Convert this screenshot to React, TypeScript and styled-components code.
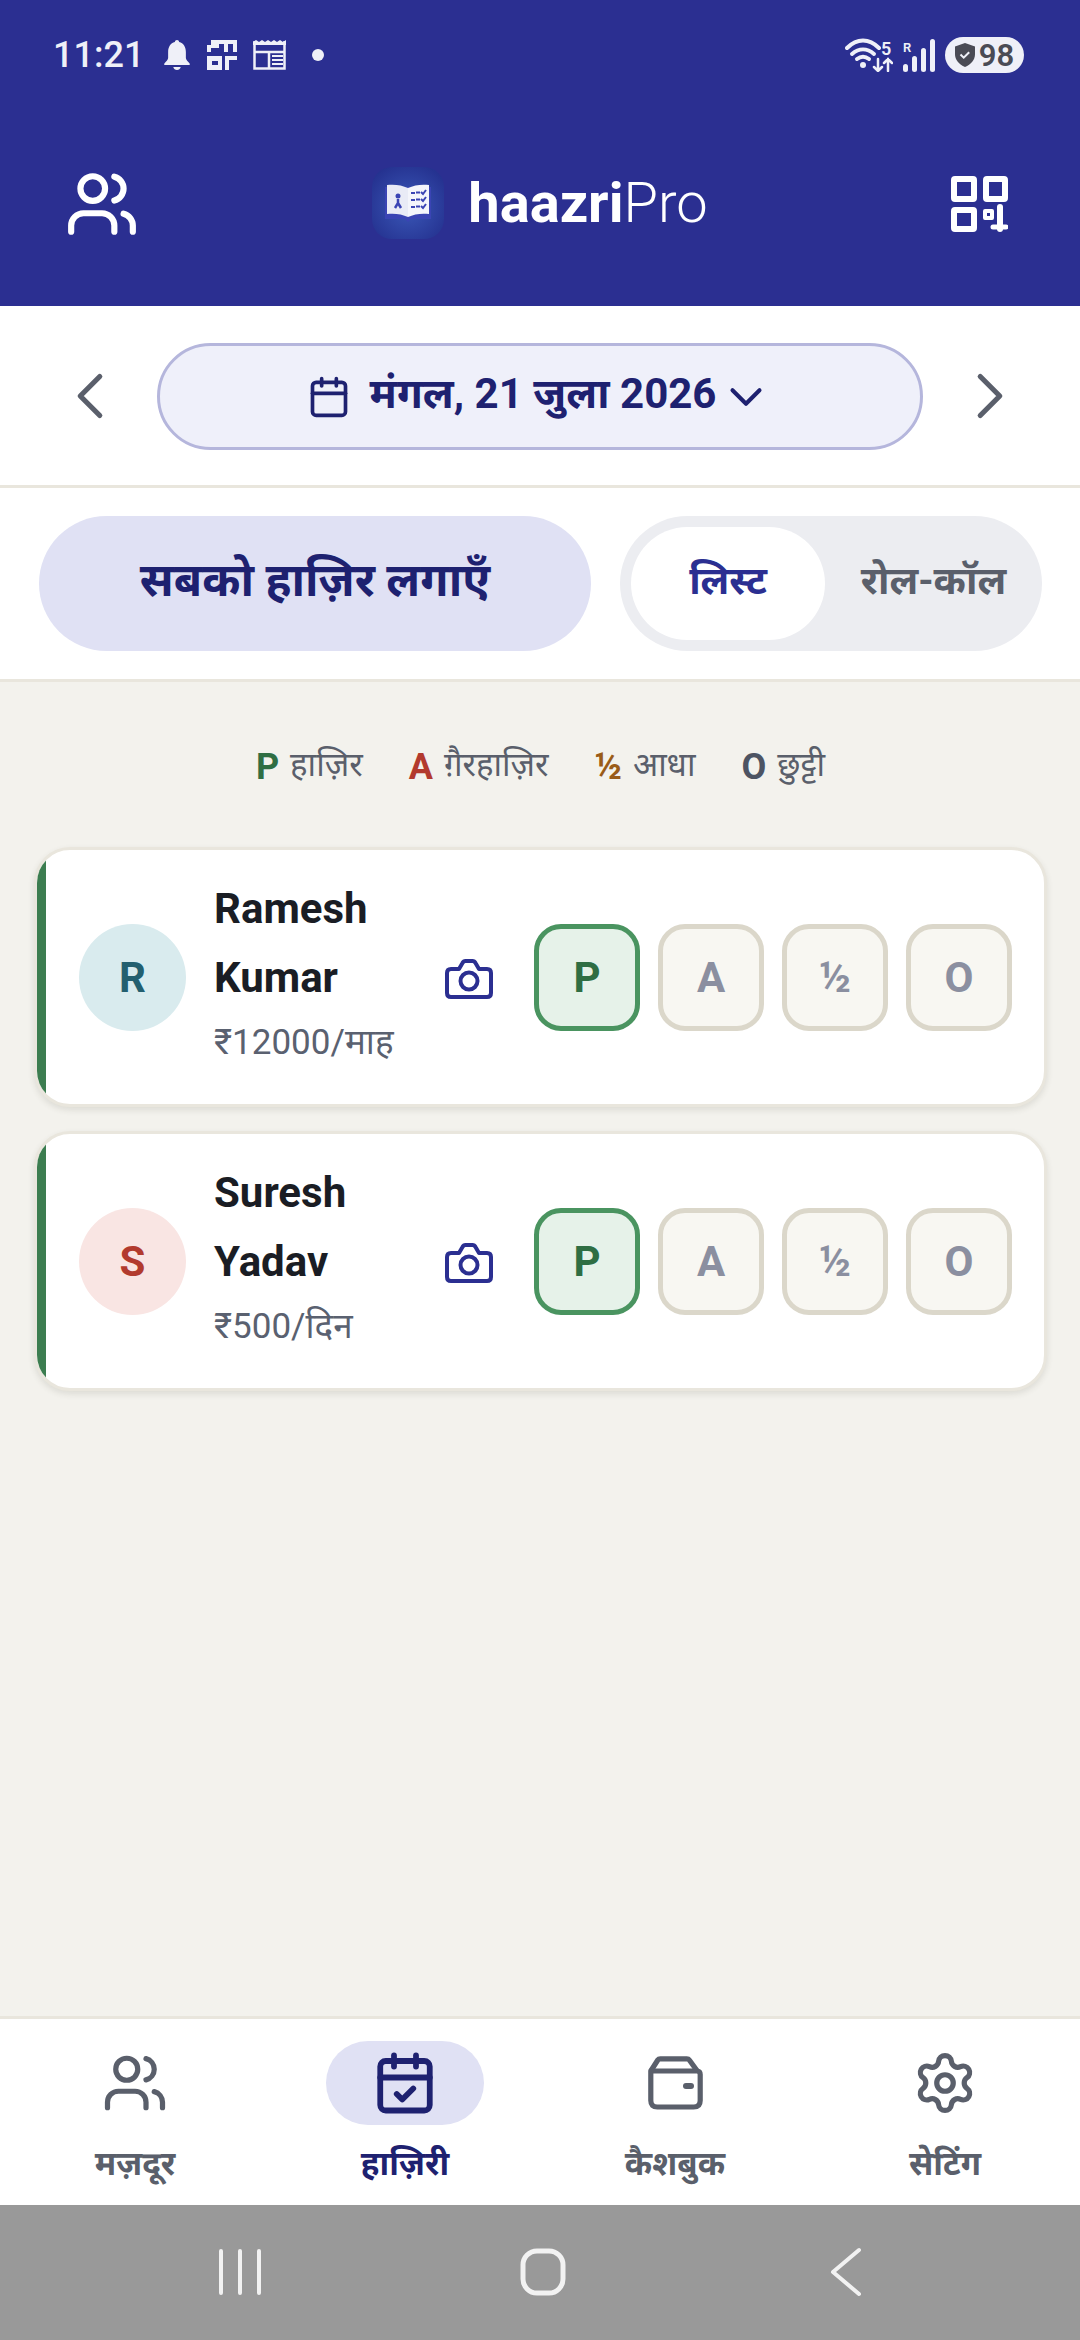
import React from "react";
import styled, { createGlobalStyle } from "styled-components";
import { Users, ChevronLeft, ChevronRight, ChevronDown, Calendar, CalendarCheck, Settings } from "lucide-react";

const Global = createGlobalStyle`
  html, body { margin: 0; padding: 0; background: #f3f2ed; }
  body { font-family: Roboto, "Noto Sans Devanagari", "Noto Sans", sans-serif; }
  * { box-sizing: border-box; }
`;

const Page = styled.div`
  width: 1080px;
  height: 2340px;
  display: flex;
  flex-direction: column;
  overflow: hidden;
  background: #f3f2ed;
`;
const Header = styled.header`
  height: 306px;
  background: #2b2f91;
  color: #fff;
  display: flex;
  flex-direction: column;
`;
const StatusBar = styled.div`
  height: 110px;
  padding: 0 56px 0 53px;
  display: flex;
  align-items: center;
  justify-content: space-between;
  color: #eff0f8;
`;
const StatusGroup = styled.div<{ $gap: number }>`
  display: flex;
  align-items: center;
  gap: ${(p) => p.$gap}px;
`;
const Time = styled.span`
  font: 500 36px Roboto, sans-serif;
  margin-right: 3px;
`;
const Dot = styled.span`
  width: 12px;
  height: 12px;
  margin-left: 10px;
  border-radius: 50%;
  background: currentColor;
`;
const Battery = styled.div`
  width: 79px;
  height: 36px;
  border-radius: 18px;
  background: #eff0f8;
  color: #4a4b55;
  display: flex;
  align-items: center;
  justify-content: center;
  gap: 4px;
  font: 600 31px Roboto, sans-serif;
`;
const TopBar = styled.div`
  flex: 1;
  padding: 0 72px 8px 65px;
  display: flex;
  align-items: center;
  justify-content: space-between;
`;
const Brand = styled.div`
  display: flex;
  align-items: center;
  gap: 24px;
  margin: 0 10px 2px 0;
`;
const BrandText = styled.div`
  font: 300 56px Roboto, sans-serif;
  b { font-weight: 700; }
`;
const DateRow = styled.div`
  height: 182px;
  background: #fff;
  border-bottom: 3px solid #e9e6dd;
  display: flex;
  align-items: center;
  justify-content: space-between;
  padding: 0 51px;
  color: #5a5f6b;
`;
const DatePill = styled.div`
  width: 766px;
  height: 107px;
  margin-top: 2px;
  border: 3px solid #b5b6dc;
  border-radius: 54px;
  background: #eff0fa;
  color: #1e2170;
  display: flex;
  align-items: center;
  justify-content: center;
  font-weight: 700;
  font-size: 42px;
`;
const DateLabel = styled.span`
  margin: 0 3px 0 19px;
`;
const ActionRow = styled.div`
  height: 194px;
  background: #fff;
  border-bottom: 3px solid #e9e6dd;
  display: flex;
  align-items: center;
  padding: 0 38px 0 39px;
  gap: 29px;
`;
const MarkAll = styled.div`
  width: 552px;
  height: 135px;
  border-radius: 68px;
  background: #e0e1f4;
  color: #1e2170;
  display: flex;
  align-items: center;
  justify-content: center;
  font-weight: 700;
  font-size: 46px;
`;
const Toggle = styled.div`
  width: 422px;
  height: 135px;
  border-radius: 68px;
  background: #ecedf1;
  padding: 11px 0 11px 11px;
  display: flex;
  align-items: center;
`;
const ToggleItem = styled.div<{ $on?: boolean }>`
  flex: ${(p) => (p.$on ? "0 0 194px" : "1")};
  height: 113px;
  border-radius: 57px;
  background: ${(p) => (p.$on ? "#fff" : "transparent")};
  color: ${(p) => (p.$on ? "#2b2f91" : "#5a5f6b")};
  display: flex;
  align-items: center;
  justify-content: center;
  font-weight: 700;
  font-size: 39px;
`;
const Main = styled.main`
  flex: 1;
  padding: 0 33px 0 34px;
  display: flex;
  flex-direction: column;
`;
const Legend = styled.div`
  height: 165px;
  padding-top: 5px;
  display: flex;
  align-items: center;
  justify-content: center;
  gap: 46px;
  font-size: 33px;
  color: #5a5f6b;
`;
const LegendItem = styled.span`
  display: flex;
  align-items: center;
  gap: 11px;
`;
const LegendKey = styled.b<{ $c: string }>`
  color: ${(p) => p.$c};
  font-size: 36px;
  font-weight: 700;
`;
const Cards = styled.div`
  display: flex;
  flex-direction: column;
  gap: 24px;
`;
const Card = styled.div`
  position: relative;
  overflow: hidden;
  height: 260px;
  background: #fff;
  border: 3px solid #e9e6dd;
  border-radius: 36px;
  box-shadow: 0 3px 6px rgba(60, 55, 40, 0.12);
  display: flex;
  align-items: center;
  padding: 0 32px 0 42px;
  &::before {
    content: "";
    position: absolute;
    left: 0;
    top: 0;
    bottom: 0;
    width: 9px;
    background: #3c7d50;
  }
`;
const Avatar = styled.div<{ $bg: string; $c: string }>`
  flex: none;
  width: 107px;
  height: 107px;
  border-radius: 50%;
  background: ${(p) => p.$bg};
  color: ${(p) => p.$c};
  display: flex;
  align-items: center;
  justify-content: center;
  font: 700 42px Roboto, sans-serif;
`;
const Info = styled.div`
  width: 231px;
  margin-left: 28px;
  padding-bottom: 6px;
  flex: none;
`;
const Name = styled.div`
  font: 700 42px/69px Roboto, sans-serif;
  color: #1a1d24;
`;
const Sub = styled.div`
  font-size: 35px;
  line-height: 62px;
  color: #5a6170;
`;
const CamWrap = styled.div`
  color: #2b2f91;
  display: flex;
  margin-top: 4px;
`;
const Marks = styled.div`
  margin-left: auto;
  display: flex;
  gap: 18px;
`;
const Mark = styled.div<{ $on?: boolean }>`
  width: 106px;
  height: 107px;
  border-radius: 27px;
  border: 5px solid ${(p) => (p.$on ? "#4a9460" : "#dbd7ca")};
  background: ${(p) => (p.$on ? "#e6f2e9" : "#f8f7f2")};
  color: ${(p) => (p.$on ? "#2f6e43" : "#8b8fa0")};
  display: flex;
  align-items: center;
  justify-content: center;
  font: 700 42px Roboto, sans-serif;
`;
const BottomNav = styled.nav`
  height: 189px;
  background: #fff;
  border-top: 3px solid #e9e6dd;
  display: grid;
  grid-template-columns: repeat(4, 1fr);
`;
const NavItem = styled.div<{ $on?: boolean }>`
  display: flex;
  flex-direction: column;
  align-items: center;
  padding-top: 22px;
  color: ${(p) => (p.$on ? "#1e2170" : "#5a5f6b")};
  font-weight: 700;
  font-size: 33px;
`;
const NavIcon = styled.div<{ $on?: boolean }>`
  width: 158px;
  height: 84px;
  border-radius: 42px;
  background: ${(p) => (p.$on ? "#e0e1f4" : "transparent")};
  display: flex;
  align-items: center;
  justify-content: center;
  margin-bottom: 19px;
`;
const SystemBar = styled.div`
  height: 135px;
  background: #999999;
  display: flex;
  align-items: center;
  justify-content: center;
  padding: 0 0 1px 5px;
`;
const SysSlot = styled.div`
  width: 303px;
  display: flex;
  justify-content: center;
`;

const Bell = () => (
  <svg width="28" height="32" viewBox="0 0 30 32" fill="currentColor" preserveAspectRatio="none">
    <path d="M15 1c1.300 0 2.200.9 2.300 2.100C22 4.300 24.500 8 24.500 13v6c0 1.800 2.300 3.600 4 5.500.6.800.2 1.500-.8 1.500H2.300c-1 0-1.400-.7-.8-1.500 1.700-1.900 4-3.700 4-5.500v-6c0-5 2.500-8.700 7.200-9.900C12.800 1.900 13.700 1 15 1z" />
    <path d="M11 28h8c-.5 1.800-2 3-4 3s-3.500-1.200-4-3z" />
  </svg>
);
const MiniGrid = () => (
  <svg width="30" height="30" viewBox="0 0 30 30" fill="currentColor">
    <path d="M4 0h26v12h-4V4h-5v8h-4V4h-5v4H4z" />
    <path d="M0 5h4v7H0z" />
    <path fillRule="evenodd" d="M0 16h15v14H0zM5 21v4h6v-4z" />
    <path d="M18 16h12v4h-8v10h-4z" />
  </svg>
);
const News = () => (
  <svg width="33" height="30" viewBox="0 0 33 30" fill="none" stroke="currentColor" strokeWidth="2.500">
    <path d="M1.500 1v27.500h30V1" />
    <path d="M0 2l3-2 3 2 3-2 3 2 3-2 3 2 3-2 3 2 3-2 3 2 3-2v5H0z" fill="currentColor" stroke="none" />
    <path d="M1.500 12h30M16 12v16.500" />
    <path d="M19 16h11M19 20h11M19 24h11" strokeWidth="2" />
  </svg>
);
const Wifi = () => (
  <svg width="48" height="34" viewBox="0 0 48 34" fill="none" stroke="currentColor" strokeLinecap="round">
    <path d="M2 10C12 0 24 0 34 10" strokeWidth="4" />
    <path d="M7 16c7-6 15-6 22 0" strokeWidth="4" />
    <path d="M12 21c4-3 8-3 12 0" strokeWidth="4" />
    <circle cx="18" cy="27" r="3" fill="currentColor" stroke="none" />
    <path d="M33 21v12M29 29l4 4 4-4M43 33V21M39 25l4-4 4 4" strokeWidth="2.500" />
    <text x="36" y="17" fontFamily="Roboto" fontWeight="600" fontSize="18" fill="currentColor" stroke="none">5</text>
  </svg>
);
const Signal = () => (
  <svg width="32" height="33" viewBox="0 0 32 33" fill="currentColor">
    <text x="0" y="13" fontFamily="Roboto" fontWeight="600" fontSize="13">R</text>
    <rect x="0" y="25" width="5" height="8" rx="2.500" />
    <rect x="9" y="17" width="5" height="16" rx="2.500" />
    <rect x="18" y="9" width="5" height="24" rx="2.500" />
    <rect x="27" y="0" width="5" height="33" rx="2.500" />
  </svg>
);
const Shield = () => (
  <svg width="20" height="24" viewBox="0 0 20 24">
    <path d="M10 0l10 3.500V11c0 6-4 10.500-10 13C4 21.500 0 17 0 11V3.500z" fill="#4a4b55" />
    <path d="M5.500 11.500l3.200 3.200 5.500-5.500" fill="none" stroke="#eff0f8" strokeWidth="2" />
  </svg>
);
const Logo = () => (
  <svg width="72" height="72" viewBox="0 0 72 72">
    <defs>
      <radialGradient id="lg" cx="50%" cy="55%" r="62%">
        <stop offset="0%" stopColor="#3a58b8" />
        <stop offset="100%" stopColor="#253290" />
      </radialGradient>
    </defs>
    <rect width="72" height="72" rx="20" fill="url(#lg)" />
    <path d="M13 20h46v32H39l-3 3-3-3H13z" fill="#3a44b4" />
    <path d="M15 18c7-1 15 0 21 3v29c-6-3-14-4-21-3z" fill="#e9ebf6" />
    <path d="M57 18c-7-1-15 0-21 3v29c6-3 14-4 21-3z" fill="#f4f5fb" />
    <circle cx="26" cy="29" r="2.500" fill="#3a44b4" />
    <path d="M26 32v4l-3 5M26 36l3 5" stroke="#3a44b4" strokeWidth="2.500" fill="none" />
    <path d="M39 26h4M39 33h4M39 40h4M44 25.500h4M44 32.500h4M44 39.500h4" stroke="#3a44b4" strokeWidth="2" />
    <path d="M49 25l2 2 3-4M49 32l2 2 3-4M49 39l2 2 3-4" stroke="#3a44b4" strokeWidth="2" fill="none" />
  </svg>
);
const QrIcon = () => (
  <svg width="57" height="56" viewBox="0 0 57 56" fill="none" stroke="currentColor" strokeWidth="6" strokeLinejoin="round">
    <rect x="3" y="3" width="20" height="20" rx="1" />
    <rect x="35" y="3" width="19" height="20" rx="1" />
    <rect x="3" y="34" width="20" height="19" rx="1" />
    <rect x="34" y="35" width="7" height="7" strokeWidth="4" />
    <path d="M49 31v22" strokeLinecap="round" />
    <path d="M42 51h13" strokeWidth="5" strokeLinecap="round" />
  </svg>
);
const CameraIcon = () => (
  <svg width="48" height="40" viewBox="0 0 48 40" fill="none" stroke="currentColor" strokeWidth="4" strokeLinejoin="round">
    <path d="M6 10h8l3.500-6q1-2 3-2h7q2 0 3 2l3.500 6h8q4 0 4 4v20q0 4-4 4H6q-4 0-4-4V14q0-4 4-4z" />
    <circle cx="24" cy="22" r="8.500" />
  </svg>
);
const WalletIcon = () => (
  <svg width="55" height="54" viewBox="0 0 55 54" fill="none" stroke="currentColor" strokeWidth="5.200" strokeLinejoin="round">
    <path d="M2.800 15h46q3.400 0 3.400 3.500v26q0 6.500-6.500 6.500H9.300q-6.500 0-6.500-6.500V15z" />
    <path d="M2.800 15l7-11q.8-1.200 2.500-1.200h26.500q1.700 0 2.500 1.200l8 11" />
    <rect x="35" y="27" width="11" height="6" rx="3" fill="currentColor" stroke="none" />
  </svg>
);
const NavBars = () => (
  <svg width="42" height="48" viewBox="0 0 42 48" stroke="#f2f2f2" strokeWidth="4" strokeLinecap="round">
    <path d="M2 3v42M21 3v42M40 3v42" />
  </svg>
);
const NavHome = () => (
  <svg width="46" height="48" viewBox="0 0 46 48" fill="none" stroke="#f2f2f2" strokeWidth="5">
    <rect x="3" y="3" width="40" height="42" rx="14" />
  </svg>
);
const NavBack = () => (
  <svg width="32" height="50" viewBox="0 0 32 50" fill="none" stroke="#f2f2f2" strokeWidth="4" strokeLinecap="round" strokeLinejoin="round">
    <path d="M29 3L3 25l26 22" />
  </svg>
);

const LEGEND = [
  { k: "P", c: "#2f6e43", t: "हाज़िर" },
  { k: "A", c: "#b23a2e", t: "ग़ैरहाज़िर" },
  { k: "½", c: "#9a5c18", t: "आधा" },
  { k: "O", c: "#4d5463", t: "छुट्टी" },
];
const WORKERS = [
  { first: "Ramesh", last: "Kumar", i: "R", bg: "#d9ebee", c: "#235f6f", sub: "₹12000/माह" },
  { first: "Suresh", last: "Yadav", i: "S", bg: "#f9e5e3", c: "#b23a2e", sub: "₹500/दिन" },
];

export default function App() {
  return (
    <Page>
      <Global />
      <Header>
        <StatusBar>
          <StatusGroup $gap={16}>
            <Time>11:21</Time>
            <Bell />
            <MiniGrid />
            <News />
            <Dot />
          </StatusGroup>
          <StatusGroup $gap={10}>
            <Wifi />
            <Signal />
            <Battery>
              <Shield />
              98
            </Battery>
          </StatusGroup>
        </StatusBar>
        <TopBar>
          <Users size={74} strokeWidth={2} />
          <Brand>
            <Logo />
            <BrandText>
              <b>haazri</b>Pro
            </BrandText>
          </Brand>
          <QrIcon />
        </TopBar>
      </Header>
      <DateRow>
        <ChevronLeft size={78} strokeWidth={1.6} />
        <DatePill>
          <Calendar size={44} strokeWidth={2} />
          <DateLabel>मंगल, 21 जुला 2026</DateLabel>
          <ChevronDown size={54} strokeWidth={1.8} />
        </DatePill>
        <ChevronRight size={78} strokeWidth={1.6} />
      </DateRow>
      <ActionRow>
        <MarkAll>सबको हाज़िर लगाएँ</MarkAll>
        <Toggle>
          <ToggleItem $on>लिस्ट</ToggleItem>
          <ToggleItem>रोल-कॉल</ToggleItem>
        </Toggle>
      </ActionRow>
      <Main>
        <Legend>
          {LEGEND.map((l) => (
            <LegendItem key={l.k}>
              <LegendKey $c={l.c}>{l.k}</LegendKey>
              {l.t}
            </LegendItem>
          ))}
        </Legend>
        <Cards>
          {WORKERS.map((w) => (
            <Card key={w.i}>
              <Avatar $bg={w.bg} $c={w.c}>{w.i}</Avatar>
              <Info>
                <Name>{w.first}</Name>
                <Name>{w.last}</Name>
                <Sub>{w.sub}</Sub>
              </Info>
              <CamWrap>
                <CameraIcon />
              </CamWrap>
              <Marks>
                <Mark $on>P</Mark>
                <Mark>A</Mark>
                <Mark>½</Mark>
                <Mark>O</Mark>
              </Marks>
            </Card>
          ))}
        </Cards>
      </Main>
      <BottomNav>
        <NavItem>
          <NavIcon><Users size={66} strokeWidth={1.9} /></NavIcon>
          मज़दूर
        </NavItem>
        <NavItem $on>
          <NavIcon $on><CalendarCheck size={66} strokeWidth={2.1} /></NavIcon>
          हाज़िरी
        </NavItem>
        <NavItem>
          <NavIcon><WalletIcon /></NavIcon>
          कैशबुक
        </NavItem>
        <NavItem>
          <NavIcon><Settings size={66} strokeWidth={1.9} /></NavIcon>
          सेटिंग
        </NavItem>
      </BottomNav>
      <SystemBar>
        <SysSlot><NavBars /></SysSlot>
        <SysSlot><NavHome /></SysSlot>
        <SysSlot><NavBack /></SysSlot>
      </SystemBar>
    </Page>
  );
}
